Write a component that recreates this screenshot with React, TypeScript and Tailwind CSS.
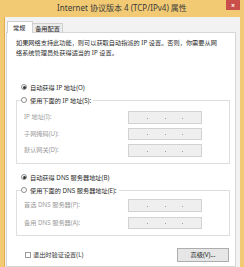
import React from "react";

const ipFields = ["IP 地址(I):", "子网掩码(U):", "默认网关(D):"];
const dnsFields = ["首选 DNS 服务器(P):", "备用 DNS 服务器(A):"];

function Radio({ checked, label }: { checked?: boolean; label: string }) {
  return (
    <div className="flex h-[13px] items-center gap-[3px]">
      <span className="flex h-[6px] w-[6px] items-center justify-center rounded-full border border-[#8c8c8c] bg-white">
        {checked && <span className="h-[3px] w-[3px] rounded-full bg-[#333]" />}
      </span>
      <span className="whitespace-nowrap text-[6.2px] leading-[13px] text-[#2a2a2a]">{label}</span>
    </div>
  );
}

function IpRow({ label }: { label: string }) {
  return (
    <div className="grid h-[12.5px] grid-cols-[104px_74px] items-center pl-[7px]">
      <span className="whitespace-nowrap text-[6.2px] leading-none text-[#9c9c9c]">{label}</span>
      <div className="flex h-full items-center justify-between border border-[#d2d2d2] bg-[#efefef] px-[18px] pt-[2px]">
        <span className="h-[1px] w-[1px] bg-[#9a9a9a]" />
        <span className="h-[1px] w-[1px] bg-[#9a9a9a]" />
        <span className="h-[1px] w-[1px] bg-[#9a9a9a]" />
      </div>
    </div>
  );
}

export default function App() {
  return (
    <div className="flex h-[267px] w-[244px] flex-col overflow-hidden bg-[#f2ca73] font-['Noto_Sans','Noto_Sans_CJK_SC',sans-serif]">
      {/* Title bar */}
      <div className="flex h-[17px] shrink-0 pr-[4px]">
        <div className="flex-1 pl-[18px] text-center text-[8px] leading-[16px] text-[#3a3a3a]">
          Internet 协议版本 4 (TCP/IPv4) 属性
        </div>
        <div className="flex h-[10px] w-[14px] items-center justify-center bg-[#c9504a] text-[7px] font-bold leading-none text-white">
          ×
        </div>
      </div>

      {/* Window body */}
      <div className="flex flex-1 pr-[4px]">
        <div className="w-[5px] border-r border-[#e3ad48]" />
        <div className="flex flex-1 flex-col bg-[#f2f2f2] pl-[1px] pr-[4px] pt-[4px]">
          {/* Tabs */}
          <div className="flex h-[11px] items-end pl-[1px]">
            <div className="relative z-10 -mb-[1px] h-[12px] w-[26px] border border-b-0 border-[#cfcfcf] bg-white pl-[5px] text-[6.2px] leading-[11px] text-[#222]">
              常规
            </div>
            <div className="h-[9px] w-[30px] border border-b-0 border-l-0 border-[#cfcfcf] bg-[#ececec] text-center text-[6.2px] leading-[9px] text-[#222]">
              备用配置
            </div>
          </div>

          {/* Panel */}
          <div className="flex flex-1 flex-col border border-[#d6d6d6] bg-white">
            <p className="whitespace-nowrap pl-[9px] pt-[5px] text-[6.2px] leading-[10px] text-[#2a2a2a]">
              如果网络支持此功能，则可以获取自动指派的 IP 设置。否则，你需要从网
              <br />
              络系统管理员处获得适当的 IP 设置。
            </p>

            <div className="mt-[22.5px] pl-[14px]">
              <Radio checked label="自动获得 IP 地址(O)" />
            </div>
            <fieldset className="ml-[9px] w-[214px] border border-[#dedede] pb-[6.5px]">
              <legend className="ml-[4px] pr-[2px]">
                <Radio label="使用下面的 IP 地址(S):" />
              </legend>
              <div className="flex flex-col gap-[4px] pt-[4.5px]">
                {ipFields.map((f) => (
                  <IpRow key={f} label={f} />
                ))}
              </div>
            </fieldset>

            <div className="mt-[6.5px] pl-[14px]">
              <Radio checked label="自动获得 DNS 服务器地址(B)" />
            </div>
            <fieldset className="ml-[9px] w-[214px] border border-[#dedede] pb-[6px]">
              <legend className="ml-[4px] pr-[2px]">
                <Radio label="使用下面的 DNS 服务器地址(E):" />
              </legend>
              <div className="flex flex-col gap-[5px] pt-[2.5px]">
                {dnsFields.map((f) => (
                  <IpRow key={f} label={f} />
                ))}
              </div>
            </fieldset>

            <div className="mt-[12px] flex items-center pl-[18px] pr-[6px]">
              <span className="h-[6px] w-[6px] border border-[#9a9a9a] bg-white" />
              <span className="ml-[2px] whitespace-nowrap text-[6.2px] leading-none text-[#3a3a3a]">
                退出时验证设置(L)
              </span>
              <button className="ml-auto h-[14px] w-[52px] border border-[#adadad] bg-[#e6e6e6] text-[6.2px] leading-none text-[#222]">
                高级(V)...
              </button>
            </div>
          </div>
        </div>
      </div>
    </div>
  );
}
